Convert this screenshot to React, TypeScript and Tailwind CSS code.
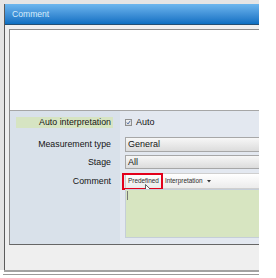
import React from "react";

const font = { fontFamily: '"Liberation Sans", Arial, sans-serif' };

function Dropdown({ value, h }: { value: string; h: string }) {
  return (
    <div
      className={`${h} w-[150px] shrink-0 flex items-center pl-[2px] border border-[#a7a7a7] bg-gradient-to-b from-[#f7f7f7] to-[#dcdcdc] text-[9px] text-[#141414] leading-none`}
    >
      {value}
    </div>
  );
}

function Cursor() {
  return (
    <svg width="7" height="10" viewBox="0 0 7 10" className="absolute left-[19px] top-[10px]">
      <path d="M0.5 0.5 L0.5 8 L2.3 6.3 L3.6 9.3 L4.8 8.8 L3.6 5.9 L6 5.9 Z" fill="#fff" stroke="#222" strokeWidth="0.7" />
    </svg>
  );
}

export default function App() {
  return (
    <div className="w-[276px] h-[278px] bg-white" style={font}>
      <div className="w-[259px] overflow-hidden">
        {/* window frame */}
        <div className="bg-[#e4e4e4] pt-[4px] pl-[4px]">
          <div className="flex flex-col border-l border-[#5b5b5b] h-[266px]">
            {/* title bar */}
            <div className="h-[21px] shrink-0 flex items-center pl-[7px] bg-gradient-to-b from-[#6cb6ee] to-[#0a6fc2] border-b border-[#244f74]">
              <span className="text-[8.6px] text-[#d5ecfb] leading-none">Comment</span>
            </div>

            {/* body */}
            <div className="flex-1 flex flex-col bg-[#efefef] pt-[4px] pl-[4px]">
              <div className="w-[270px] shrink-0 flex flex-col border-t border-l border-[#8c8c8c] border-b border-b-[#666]">
                {/* comment display area */}
                <div className="h-[81px] bg-white border-b border-[#a6a6a6]" />

                {/* form */}
                <div className="flex h-[133px]">
                  <div className="w-[110px] shrink-0 bg-[#d9e1ea] pt-[6px] pl-[6px] pr-[7px] flex flex-col text-[8.8px] text-[#141414] leading-none">
                    <div className="h-[11px] flex items-center justify-end pr-[2px] bg-[#d6e4c2]">
                      Auto interpretation
                    </div>
                    <div className="mt-[9px] h-[15px] flex items-center justify-end pr-[2px]">
                      Measurement type
                    </div>
                    <div className="mt-[3px] h-[14px] flex items-center justify-end pr-[2px]">Stage</div>
                    <div className="mt-[4px] h-[16px] flex items-center justify-end pr-[2px]">Comment</div>
                  </div>

                  <div className="flex-1 bg-[#e3e8f0] pt-[6px] pl-[5px] flex flex-col">
                    <div className="h-[11px] flex items-center gap-[4px] text-[9px] text-[#141414] leading-none">
                      <div className="w-[7px] h-[7px] border border-[#8f8f8f] bg-gradient-to-b from-[#f2f2f2] to-[#dadada] flex items-center justify-center">
                        <svg width="5" height="5" viewBox="0 0 5 5">
                          <path d="M0.8 2.6 L2 3.9 L4.3 0.8" fill="none" stroke="#3c5d9c" strokeWidth="0.9" />
                        </svg>
                      </div>
                      Auto
                    </div>
                    <div className="mt-[9px]">
                      <Dropdown value="General" h="h-[15px]" />
                    </div>
                    <div className="mt-[3px]">
                      <Dropdown value="All" h="h-[14px]" />
                    </div>

                    {/* toolbar */}
                    <div className="mt-[4px] relative h-[16px] w-[150px] shrink-0 flex items-center pl-[2px] border border-[#cfcfcf] bg-gradient-to-b from-white to-[#ececec] text-[6.4px] text-[#2b2b2b] leading-none">
                      <span>Predefined</span>
                      <span className="ml-[6px]">Interpretation</span>
                      <svg width="4" height="3" viewBox="0 0 4 3" className="ml-[4px]">
                        <path d="M0 0 L4 0 L2 2.5 Z" fill="#333" />
                      </svg>
                      <div className="absolute left-[-4px] top-[-1px] w-[41px] h-[17px] border-2 border-[#e3001b]" />
                      <Cursor />
                    </div>

                    {/* text area */}
                    <div className="relative h-[49px] w-[150px] shrink-0 bg-[#d7e5c1] border border-[#c5ced8]">
                      <div className="absolute left-[1px] top-[1px] w-[1px] h-[9px] bg-[#777]" />
                    </div>
                  </div>
                </div>
              </div>
            </div>
          </div>
        </div>
        {/* bottom edge */}
        <div className="h-[2px] bg-[#a2a2a2] ml-[4px]" />
        <div className="h-[2px] bg-white" />
        <div className="h-[1px] bg-[#9a9a9a] ml-[3px]" />
      </div>
    </div>
  );
}
